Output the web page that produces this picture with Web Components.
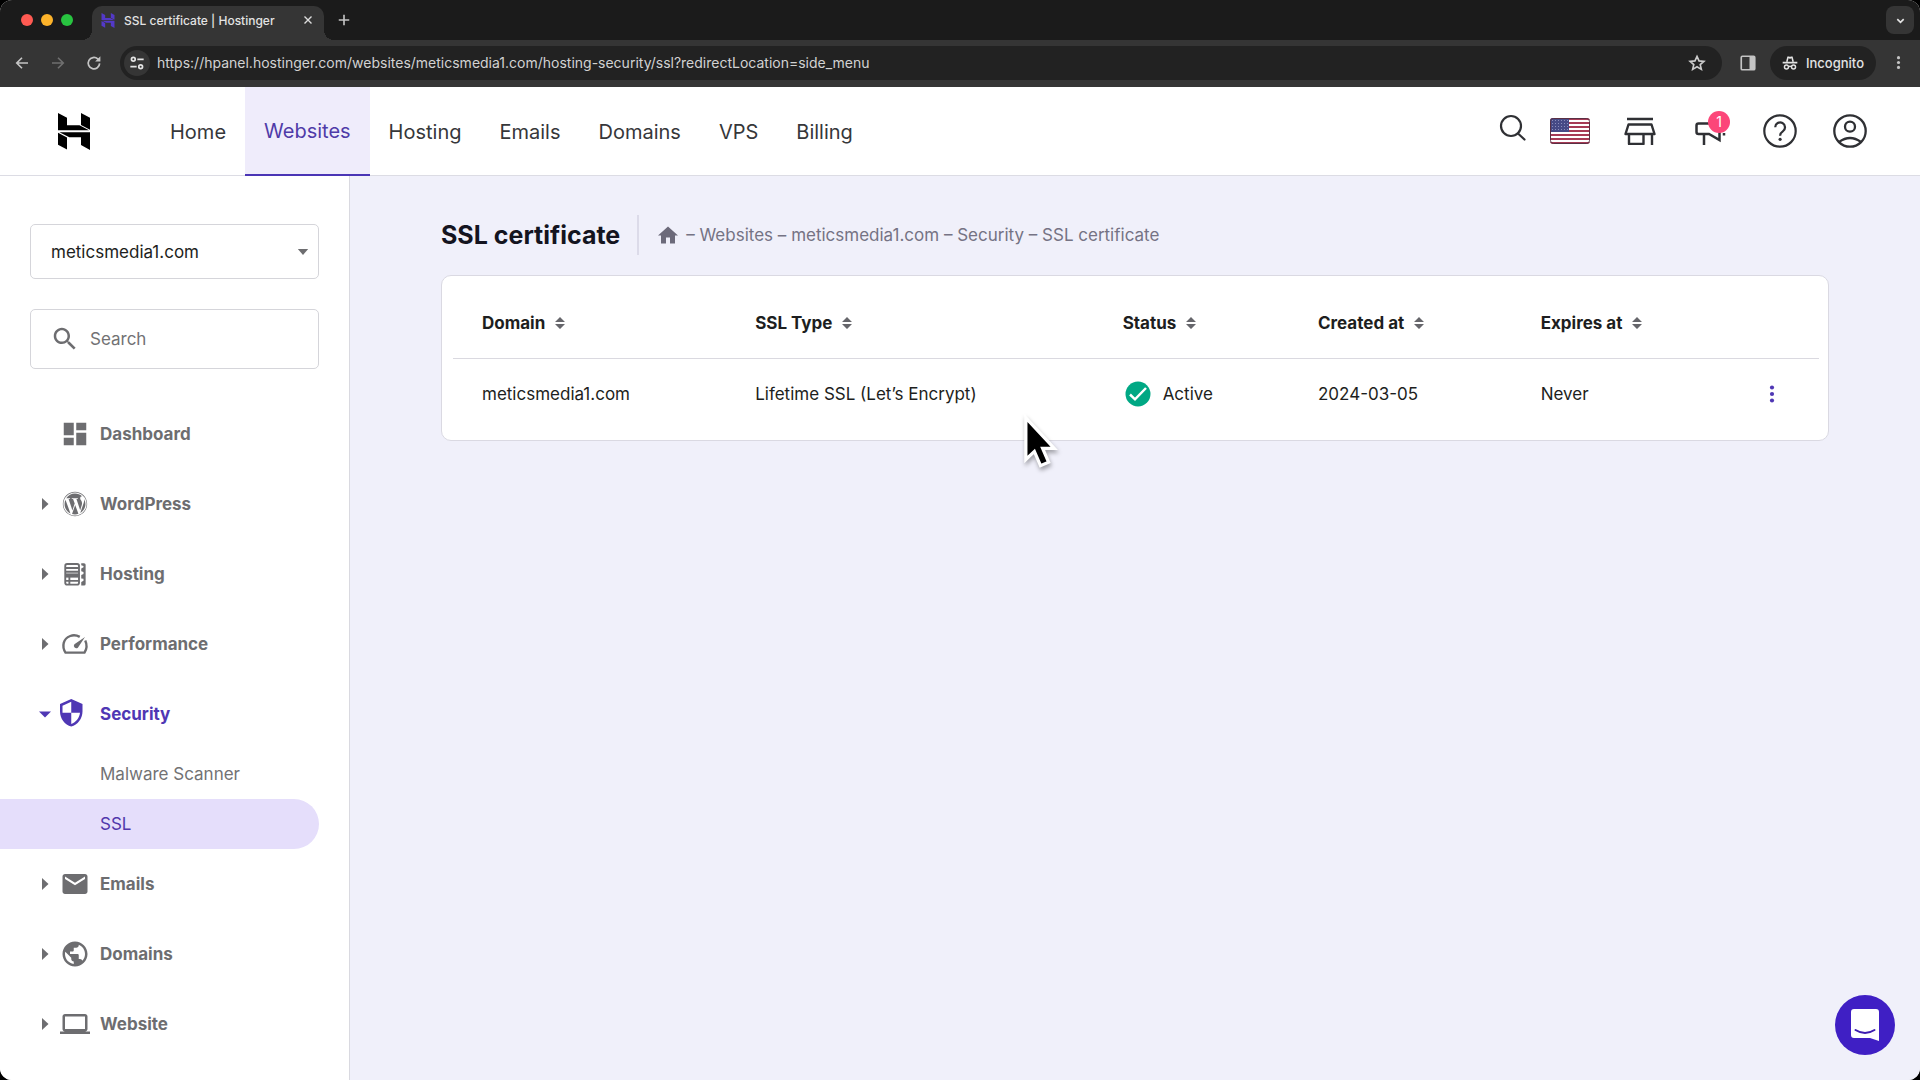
<!DOCTYPE html>
<html lang="en">
<head>
<meta charset="utf-8">
<title>SSL certificate | Hostinger</title>
<style>
  html, body { margin: 0; height: 100%; background: #000; }
  body { font-family: Inter, "Liberation Sans", sans-serif; color: #1d1e20; }
</style>
</head>
<body>
<browser-window></browser-window>

<script>
const ICONS = {
  back: ['0 0 24 24', '<path d="M20 12H5M12 5l-7 7 7 7" fill="none" stroke="currentColor" stroke-width="2.2"/>'],
  forward: ['0 0 24 24', '<path d="M4 12h15M12 5l7 7-7 7" fill="none" stroke="currentColor" stroke-width="2.2"/>'],
  reload: ['0 0 24 24', '<path d="M19.5 12.5A7.6 7.6 0 1 1 17 6.6L19.5 9" fill="none" stroke="currentColor" stroke-width="2.3"/><path d="M20.5 3v7h-7z" fill="currentColor"/>'],
  tune: ['0 0 24 24', '<g fill="none" stroke="currentColor" stroke-width="2.6"><circle cx="6.5" cy="6.500" r="2.8"/><path d="M12.500 6.500H22M2 17.500h9.500"/><circle cx="17.5" cy="17.500" r="2.8"/></g>'],
  close: ['0 0 24 24', '<path d="M5 5l14 14M19 5L5 19" fill="none" stroke="currentColor" stroke-width="2.8"/>'],
  plus: ['0 0 24 24', '<path d="M12 3v18M3 12h18" fill="none" stroke="currentColor" stroke-width="2.8"/>'],
  chevron: ['0 0 24 24', '<path d="M5 9l7 7 7-7" fill="none" stroke="currentColor" stroke-width="3.6"/>'],
  star: ['0 0 24 24', '<path d="M12 3.2l2.7 6 6.5.6-4.9 4.3 1.5 6.4L12 17.1l-5.8 3.4 1.5-6.4-4.9-4.3 6.5-.6z" fill="none" stroke="currentColor" stroke-width="2.2"/>'],
  panel: ['0 0 24 24', '<rect x="3" y="3" width="18" height="18" rx="1.5" fill="none" stroke="currentColor" stroke-width="2.2"/><path d="M14 3h7v18h-7z" fill="currentColor"/>'],
  incognito: ['0 0 24 24', '<path d="M7.3 10L9 3.6h1.6L12 4.6l1.4-1H15l1.7 6.4M1 11.4h22" fill="none" stroke="currentColor" stroke-width="2.4"/><g fill="none" stroke="currentColor" stroke-width="2.2"><circle cx="6.7" cy="18" r="3"/><circle cx="17.3" cy="18" r="3"/><path d="M9.7 17.6q2.3-1.4 4.6 0"/></g>'],
  kebab: ['0 0 24 24', '<g fill="currentColor"><circle cx="12" cy="4.2" r="2.5"/><circle cx="12" cy="12" r="2.5"/><circle cx="12" cy="19.8" r="2.5"/></g>'],
  logo: ['0 0 32 37', '<g fill="currentColor"><path d="M0 0l9 4.8v7.5h12.500l9.500 4.900H0z"/><path d="M23 0l9 4.800v12L23 12z"/><path d="M0 19.800v11.900l9 4.800V24.500z"/><path d="M1.500 19.200H32V37l-9-4.900v-7.900H11.300z"/></g>'],
  search: ['0 0 36 36', '<g fill="none" stroke="currentColor" stroke-width="2.2" stroke-linecap="round"><circle cx="16" cy="15" r="10"/><path d="M23 22.500l6.500 6"/></g>'],
  flag: ['0 0 40 26', '<defs><clipPath id="r"><rect width="40" height="26" rx="3"/></clipPath></defs><g clip-path="url(#r)"><rect width="40" height="26" fill="#fff"/><path d="M0 1h40M0 5h40M0 9h40M0 13h40M0 17h40M0 21h40M0 25h40" stroke="#a63a55" stroke-width="2"/><rect width="19" height="14" fill="#464a86"/><path d="M2 2.500h16M2 5.500h16M2 8.500h16M2 11.500h16" stroke="#8b8dbc" stroke-dasharray="1 2"/></g><rect x=".5" y=".5" width="39" height="25" rx="3" fill="none" stroke="#5a3044"/>'],
  store: ['0 0 36 36', '<g fill="none" stroke="currentColor" stroke-width="2.4"><path d="M5 6h26M6.500 11.500h23l3 9.500h-29zM7 21v9.900h14.500V21M30 21v11" stroke-linejoin="round"/></g>'],
  megaphone: ['0 0 36 36', '<path d="M17 10.500H6.500q-2 0-2 2v6.500q0 2 2 2H17l10.500 6V12M12 21v11M32 20v2.500" fill="none" stroke="currentColor" stroke-width="2.500"/>'],
  help: ['0 0 36 36', '<circle cx="18" cy="18" r="15.700" fill="none" stroke="currentColor" stroke-width="2.200"/><path d="M13.200 14.200a4.900 4.900 0 1 1 7.600 4.200c-2 1.300-2.700 2-2.700 4.300" fill="none" stroke="currentColor" stroke-width="2.200"/><circle cx="18.100" cy="26.300" r="1.600" fill="currentColor"/>'],
  account: ['0 0 36 36', '<g fill="none" stroke="currentColor" stroke-width="2.300"><circle cx="18" cy="18" r="15.700"/><circle cx="18" cy="13.700" r="5"/><path d="M7 29q11-8 22 0"/></g>'],
  caret: ['0 0 12 7', '<path d="M0 0h12L6 7z" fill="currentColor"/>'],
  right: ['0 0 12 12', '<path d="M3 0l6.500 6L3 12z" fill="currentColor"/>'],
  down: ['0 0 12 12', '<path d="M0 3.500h12L6 9.500z" fill="currentColor"/>'],
  find: ['0 0 24 24', '<path fill="currentColor" d="M15.500 14h-.79l-.28-.27C15.410 12.590 16 11.110 16 9.500 16 5.910 13.090 3 9.500 3S3 5.910 3 9.500 5.910 16 9.500 16c1.610 0 3.090-.59 4.230-1.570l.27.28v.79l5 4.990L20.490 19l-4.990-5zm-6 0C7.010 14 5 11.990 5 9.500S7.010 5 9.500 5 14 7.010 14 9.500 11.990 14 9.500 14z"/>'],
  dashboard: ['0 0 24 24', '<path fill="currentColor" d="M3 13h8V3H3v10zm0 8h8v-6H3v6zm10 0h8V11h-8v10zm0-18v6h8V3h-8z"/>'],
  wordpress: ['-50 -50 612 612', '<path fill="currentColor" d="M61.700 169.400l101.500 278C92.200 413 43.300 340.200 43.300 256c0-30.900 6.600-60.100 18.400-86.600zm337.900 75.900c0-26.300-9.400-44.500-17.500-58.700-10.800-17.500-20.900-32.400-20.900-49.900 0-19.600 14.800-37.800 35.700-37.800.9 0 1.800.1 2.800.2-37.900-34.700-88.300-55.900-143.700-55.900-74.300 0-139.700 38.100-177.800 95.900 5 .2 9.700.3 13.700.3 22.200 0 56.700-2.700 56.700-2.700 11.500-.7 12.800 16.200 1.400 17.500 0 0-11.500 1.300-24.300 2l77.500 230.400L249.800 247l-33.100-90.800c-11.500-.7-22.300-2-22.300-2-11.500-.7-10.100-18.200 1.300-17.500 0 0 35.100 2.700 56 2.700 22.200 0 56.700-2.700 56.700-2.700 11.500-.7 12.800 16.200 1.400 17.500 0 0-11.500 1.300-24.300 2l76.900 228.700 21.200-70.900c9-29.400 16-50.500 16-68.700zm-139.900 29.300l-63.800 185.500c19.100 5.600 39.200 8.700 60.100 8.700 24.800 0 48.500-4.300 70.600-12.100-.6-.9-1.100-1.900-1.500-2.900l-65.400-179.200zm183-120.700c.9 6.800 1.400 14 1.400 21.900 0 21.600-4 45.800-16.200 76.200l-65 187.900C426.200 403 468.700 334.500 468.700 256c0-37-9.400-71.800-26-102.100zM504 256c0 136.800-111.300 248-248 248C119.200 504 8 392.700 8 256 8 119.200 119.200 8 256 8c136.700 0 248 111.200 248 248zm-11.400 0c0-130.500-106.200-236.600-236.600-236.600C125.500 19.400 19.400 125.500 19.400 256S125.600 492.600 256 492.600c130.500 0 236.600-106.100 236.600-236.600z"/>'],
  hosting: ['0 0 24 24', '<g fill="none" stroke="currentColor" stroke-width="1.500"><rect x="4.200" y="4" width="11" height="16.500" rx="1.500"/><path d="M4.200 7.200h11M4.200 10.200h11M4.200 17.500h11M7.500 14v6.500"/></g><path d="M4 11.500h11.500v3.400H4z" fill="currentColor"/><path d="M17 3.300h2.200a1.300 1.300 0 0 1 1.300 1.300v15.300a1.300 1.300 0 0 1-1.300 1.300H17v-2.900l1.800-1v-1.500L17 15.500v-2.800l1.800-.8v-1.500L17 9.800V7.500l1.800-.9V5.500L17 5z" fill="currentColor"/>'],
  performance: ['0 0 24 24', '<path d="M20.200 9.200c1.700 3.700 1 7.200-.6 9.700H4.400C1.200 13.800 2.600 7.600 8.200 5.600c2.700-1 5.200-.6 7.600.7" fill="none" stroke="currentColor" stroke-width="1.900" stroke-linejoin="round"/><path d="M20 6.400l-5.700 8.500a2 2 0 0 1-2.800-2.800z" fill="currentColor"/>'],
  security: ['3 1 24 24', '<path fill="currentColor" d="M12 1L3 5v6c0 5.550 3.840 10.740 9 12 5.160-1.260 9-6.450 9-12V5l-9-4zm0 10.990h7c-.53 4.120-3.280 7.790-7 8.940V12H5V6.300l7-3.110v8.800z"/>'],
  emails: ['0 0 24 24', '<path fill="currentColor" d="M20 4H4c-1.100 0-1.990.9-1.990 2L2 18c0 1.100.9 2 2 2h16c1.100 0 2-.9 2-2V6c0-1.100-.9-2-2-2zm0 4l-8 5-8-5V6l8 5 8-5v2z"/>'],
  globe: ['0 0 24 24', '<path fill="currentColor" d="M12 2C6.480 2 2 6.480 2 12s4.480 10 10 10 10-4.480 10-10S17.520 2 12 2zm-1 17.930c-3.950-.49-7-3.850-7-7.930 0-.62.08-1.210.21-1.790L9 15v1c0 1.100.9 2 2 2v1.930zm6.900-2.540c-.26-.81-1-1.390-1.900-1.390h-1v-3c0-.55-.45-1-1-1H8v-2h2c.55 0 1-.45 1-1V7h2c1.100 0 2-.9 2-2v-.41c2.930 1.190 5 4.060 5 7.410 0 2.080-.8 3.970-2.100 5.390z"/>'],
  laptop: ['0 0 24 24', '<path fill="currentColor" d="M20 18c1.100 0 2-.9 2-2V6c0-1.100-.9-2-2-2H4c-1.100 0-2 .9-2 2v10c0 1.100.9 2 2 2H0v2h24v-2h-4zM4 6h16v10H4V6z"/>'],
  home: ['2 3 20 17', '<path fill="currentColor" d="M10 20v-6h4v6h5v-8h3L12 3 2 12h3v8z"/>'],
  sort: ['0 0 10 12', '<path d="M0 5l5-5 5 5zM0 7h10l-5 5z" fill="currentColor"/>'],
  check: ['0 0 26 26', '<circle cx="13" cy="13" r="12.500" fill="#00a884"/><path d="M5 13.500l5 4.800L21 7" fill="none" stroke="#fff" stroke-width="2.500"/>'],
  chat: ['0 0 28 32', '<path d="M3 0h22q3 0 3 3v29l-9-3H3q-3 0-3-3V3q0-3 3-3z" fill="#fff"/><path d="M4.500 21q9.500 6 19 0" fill="none" stroke="#3d1cb0" stroke-width="2" stroke-linecap="round"/>'],
  pointer: ['0 0 40 56', '<path d="M4 3v44l9-8.500 6.500 15 8.500-3.600-6.300-14.600H34z" fill="#000" stroke="#fff" stroke-width="3.400" stroke-linejoin="miter"/>']
};

function define(name, css, render) {
  customElements.define(name, class extends HTMLElement {
    connectedCallback() {
      if (this.shadowRoot) return;
      const root = this.attachShadow({ mode: 'open' });
      root.innerHTML = `<style>*{box-sizing:border-box}a{color:inherit;text-decoration:none}button{font:inherit;color:inherit;background:none;border:0;padding:0;margin:0;display:flex;align-items:center;justify-content:center}${css}</style>${render(this)}`;
    }
  });
}

define('ui-icon',
  ':host{display:block;flex:none;width:var(--w,24px);height:var(--h,var(--w,24px))}svg{display:block;width:100%;height:100%;overflow:visible}',
  el => { const [box, body] = ICONS[el.getAttribute('name')]; return `<svg viewBox="${box}" aria-hidden="true">${body}</svg>`; });

define('browser-window', `
  :host{display:flex;flex-direction:column;height:100vh;border-radius:12px;overflow:hidden;background:#fff}
  main{flex:1;min-height:0;display:flex}
  side-bar{width:350px;flex:none}
  ssl-page{flex:1;min-width:0}`,
  () => `<browser-chrome></browser-chrome><site-header></site-header>
    <main><side-bar></side-bar><ssl-page></ssl-page></main>
    <chat-button></chat-button><mouse-pointer></mouse-pointer>`);

define('browser-chrome', `
  :host{display:block;background:#1b1b1b;color:#e3e3e3;font-size:13px;flex:none}
  .strip{height:40px;display:flex;align-items:flex-end;padding:0 6px 0 21px}
  .lights{display:flex;gap:8px;height:40px;align-items:center;margin-right:19px}
  .lights i{width:12px;height:12px;border-radius:50%}
  .tab{position:relative;height:34px;width:232px;background:#353535;border-radius:10px 10px 0 0;display:flex;align-items:center;padding:0 10px 6px 9px;gap:9px;font-size:12px;font-weight:500}
  .tab::before,.tab::after{content:"";position:absolute;bottom:0;width:10px;height:10px}
  .tab::before{left:-10px;background:radial-gradient(circle at 0 0,transparent 10px,#353535 10px)}
  .tab::after{right:-10px;background:radial-gradient(circle at 100% 0,transparent 10px,#353535 10px)}
  .tab ui-icon{color:#5339c8}
  .tab span{flex:1;white-space:nowrap}
  .new{height:40px;width:40px}
  .list{margin-left:auto;width:28px;height:28px;border-radius:8px;background:#353535;align-self:center}
  .bar{height:47px;background:#353535;display:flex;align-items:center;padding:0 13px 2px 14px}
  .bar button{height:34px}
  .nav{display:flex;gap:20px;margin-right:18px}
  .nav button{width:16px}
  .url{flex:1;height:34px;border-radius:17px;background:#222;display:flex;align-items:center;padding:0 16px 0 4px}
  .info{width:26px;border-radius:13px;background:#353535;margin-right:7px}
  .url .info{height:26px}
  input{flex:1;min-width:0;background:none;border:0;padding:0;outline:0;font:400 14px Inter,"Liberation Sans",sans-serif;color:#d2d2d2}
  .panel{width:16px;margin:0 14px 0 18px}
  .incog{border-radius:17px;background:#222;padding:0 12px;gap:8px;font-weight:500}
  .more{width:18px;margin-left:13px}`,
  () => `<div class="strip">
      <div class="lights"><i style="background:#ff5a52"></i><i style="background:#fdb32a"></i><i style="background:#28c440"></i></div>
      <div class="tab"><ui-icon name="logo" style="--w:14px;--h:15px"></ui-icon><span>SSL certificate | Hostinger</span><button aria-label="Close tab"><ui-icon name="close" style="--w:12px;color:#ddd"></ui-icon></button></div>
      <button class="new" aria-label="New tab"><ui-icon name="plus" style="--w:14px;color:#c4c4c4"></ui-icon></button>
      <button class="list" aria-label="Search tabs"><ui-icon name="chevron" style="--w:11px"></ui-icon></button>
    </div>
    <div class="bar">
      <div class="nav"><button aria-label="Back"><ui-icon name="back" style="--w:18px;color:#c4c4c4"></ui-icon></button><button aria-label="Forward"><ui-icon name="forward" style="--w:18px;color:#6f6f6f"></ui-icon></button><button aria-label="Reload"><ui-icon name="reload" style="--w:18px;color:#c4c4c4"></ui-icon></button></div>
      <div class="url"><button class="info" aria-label="Site information"><ui-icon name="tune" style="--w:16px"></ui-icon></button>
        <input aria-label="Address" value="https://hpanel.hostinger.com/websites/meticsmedia1.com/hosting-security/ssl?redirectLocation=side_menu" spellcheck="false">
        <button aria-label="Bookmark"><ui-icon name="star" style="--w:18px;color:#ccc"></ui-icon></button></div>
      <button class="panel" aria-label="Side panel"><ui-icon name="panel" style="--w:18px;color:#c4c4c4"></ui-icon></button>
      <button class="incog"><ui-icon name="incognito" style="--w:16px"></ui-icon><span>Incognito</span></button>
      <button class="more" aria-label="Menu"><ui-icon name="kebab" style="--w:15px;color:#c4c4c4"></ui-icon></button>
    </div>`);

define('nav-link', `
  :host{display:flex}
  a{display:flex;align-items:center;padding:0 19px;font-size:20px;white-space:nowrap;color:#36373a}
  :host([active]) a{background:#efecfb;color:#4f3ba8;border-bottom:2px solid #4a35b5}`,
  () => `<a href="#"><slot></slot></a>`);

define('site-header', `
  :host{display:flex;flex:none;height:89px;box-sizing:border-box;background:#fff;border-bottom:1px solid #dcdce4;padding:0 52px 0 58px}
  .logo{display:flex;align-items:center;margin-right:61px;color:#000}
  nav{display:flex;margin-bottom:-1px}
  .tools{margin-left:auto;display:flex;align-items:center;gap:34px;color:#2f3034}
  .find{margin-right:-13px;padding-bottom:4px}
  .flag{width:36px}
  .news{position:relative}
  .news span{position:absolute;left:16px;top:-2px;width:22px;height:22px;border-radius:50%;background:#fc4679;color:#fff;font-size:14px;line-height:22px;text-align:center}`,
  () => `<a class="logo" href="#" aria-label="Hostinger"><ui-icon name="logo" style="--w:32px;--h:37px"></ui-icon></a>
    <nav><nav-link>Home</nav-link><nav-link active>Websites</nav-link><nav-link>Hosting</nav-link><nav-link>Emails</nav-link><nav-link>Domains</nav-link><nav-link>VPS</nav-link><nav-link>Billing</nav-link></nav>
    <div class="tools">
      <button class="find" aria-label="Search"><ui-icon name="search" style="--w:36px"></ui-icon></button>
      <button class="flag" aria-label="Language"><ui-icon name="flag" style="--w:40px;--h:26px"></ui-icon></button>
      <button aria-label="Store"><ui-icon name="store" style="--w:36px"></ui-icon></button>
      <button class="news" aria-label="News"><ui-icon name="megaphone" style="--w:36px"></ui-icon><span>1</span></button>
      <button aria-label="Help"><ui-icon name="help" style="--w:36px"></ui-icon></button>
      <button aria-label="Account"><ui-icon name="account" style="--w:36px"></ui-icon></button>
    </div>`);

define('side-item', `
  :host{display:block}
  a{display:flex;align-items:center;height:70px;padding-left:39px;font-size:17px;font-weight:700;color:#6d6d70}
  .arrow{width:12px;margin-right:9px}
  a>ui-icon{margin-right:10px}
  :host([open]) a{color:#4f37b4}`,
  el => `<a href="#"><span class="arrow">${el.hasAttribute('leaf') ? '' : `<ui-icon name="${el.hasAttribute('open') ? 'down' : 'right'}" style="--w:12px"></ui-icon>`}</span><ui-icon name="${el.getAttribute('icon')}" style="--w:30px"></ui-icon><slot></slot></a>`);

define('side-sublink', `
  :host{display:block;padding-right:30px}
  a{display:flex;align-items:center;height:50px;padding-left:100px;border-radius:0 25px 25px 0;font-size:17px;color:#727274}
  :host([active]) a{background:#e5defb;color:#5138ac}`,
  () => `<a href="#"><slot></slot></a>`);

define('side-bar', `
  :host{display:block;box-sizing:border-box;background:#fff;border-right:1px solid #d9d9e0;padding-top:48px;overflow:hidden}
  .field{margin:0 30px 30px;border:1px solid #d5d5da;border-radius:5px;display:flex;align-items:center;color:#6d6d70}
  .site{height:55px;padding-right:9px}
  .search{height:60px;padding-left:19px}
  .search label{margin-right:10px}
  select,input{flex:1;min-width:0;height:100%;appearance:none;border:0;background:none;outline:0;font:400 17px Inter,"Liberation Sans",sans-serif;color:#1d1e20;padding:0}
  select{padding-left:20px}
  input::placeholder{color:#727274;opacity:1}`,
  () => `<div class="field site"><select aria-label="Website"><option>meticsmedia1.com</option></select><ui-icon name="caret" style="--w:12px;--h:6px"></ui-icon></div>
    <div class="field search"><label for="q" aria-label="Search"><ui-icon name="find" style="--w:30px"></ui-icon></label><input id="q" type="search" placeholder="Search"></div>
    <nav>
      <side-item leaf icon="dashboard">Dashboard</side-item>
      <side-item icon="wordpress">WordPress</side-item>
      <side-item icon="hosting">Hosting</side-item>
      <side-item icon="performance">Performance</side-item>
      <side-item open icon="security">Security</side-item>
      <side-sublink>Malware Scanner</side-sublink>
      <side-sublink active>SSL</side-sublink>
      <side-item icon="emails">Emails</side-item>
      <side-item icon="globe">Domains</side-item>
      <side-item icon="laptop">Website</side-item>
    </nav>`);

define('ssl-page', `
  :host{display:block;box-sizing:border-box;background:#f0f0fa;padding:39px 91px 0}
  header{display:flex;align-items:center;height:40px;margin-bottom:20px}
  h1{margin:0 17px 0 0;font-size:25px;line-height:30px;font-weight:700;color:#14141f;white-space:nowrap}
  .crumbs{display:flex;align-items:center;height:40px;border-left:2px solid #dcdbe9;padding-left:19px;gap:8px;font-size:17px;color:#757384;white-space:nowrap}
  .crumbs ui-icon{color:#6c6a7a}`,
  () => `<header><h1>SSL certificate</h1><nav class="crumbs" aria-label="Breadcrumb"><a href="#" aria-label="Home"><ui-icon name="home" style="--w:20px;--h:18px"></ui-icon></a><span>– <a href="#">Websites</a> – <a href="#">meticsmedia1.com</a> – <a href="#">Security</a> – <a href="#">SSL certificate</a></span></nav></header>
    <ssl-table></ssl-table>`);

define('ssl-table', `
  :host{display:block;box-sizing:border-box;background:#fff;border:1px solid #dad9e2;border-radius:10px;padding:11px 9px 11px 11px}
  table{width:100%;table-layout:fixed;border-collapse:separate;border-spacing:0;font-size:17px;color:#1d1e20}
  th,td{padding:0 0 0 29px;height:70px;text-align:left;font-weight:400;white-space:nowrap}
  th{height:72px;border-bottom:1px solid #dad9e0}
  th button{font-weight:700;gap:10px}
  th ui-icon{color:#66666b}
  .state{display:flex;align-items:center;gap:12px;padding-left:2px}
  .end{padding-right:37px}
  .row{display:flex;align-items:center;justify-content:space-between}
  .row ui-icon{color:#4f37b4}`,
  () => `<table>
      <colgroup><col style="width:20%"><col style="width:26.900%"><col style="width:14.300%"><col style="width:16.300%"><col></colgroup>
      <thead><tr>${['Domain', 'SSL Type', 'Status', 'Created at', 'Expires at'].map(t => `<th scope="col"><button>${t}<ui-icon name="sort" style="--w:10px;--h:12px"></ui-icon></button></th>`).join('')}</tr></thead>
      <tbody><tr><td>meticsmedia1.com</td><td>Lifetime SSL (Let’s Encrypt)</td>
        <td><div class="state"><ui-icon name="check" style="--w:26px"></ui-icon><span>Active</span></div></td>
        <td>2024-03-05</td><td class="end"><div class="row"><span>Never</span><button aria-label="Actions"><ui-icon name="kebab" style="--w:20px"></ui-icon></button></div></td></tr></tbody>
    </table>`);

define('chat-button', `
  :host{position:fixed;right:25px;bottom:25px}
  button{width:60px;height:60px;border-radius:50%;background:#3f1fc4}`,
  () => `<button aria-label="Open chat"><ui-icon name="chat" style="--w:28px;--h:32px"></ui-icon></button>`);

define('mouse-pointer', `
  :host{position:fixed;left:1022px;top:415px;pointer-events:none;filter:drop-shadow(1px 3px 2px #0005)}`,
  () => `<ui-icon name="pointer" style="--w:38px;--h:53px"></ui-icon>`);
</script>
</body>
</html>
